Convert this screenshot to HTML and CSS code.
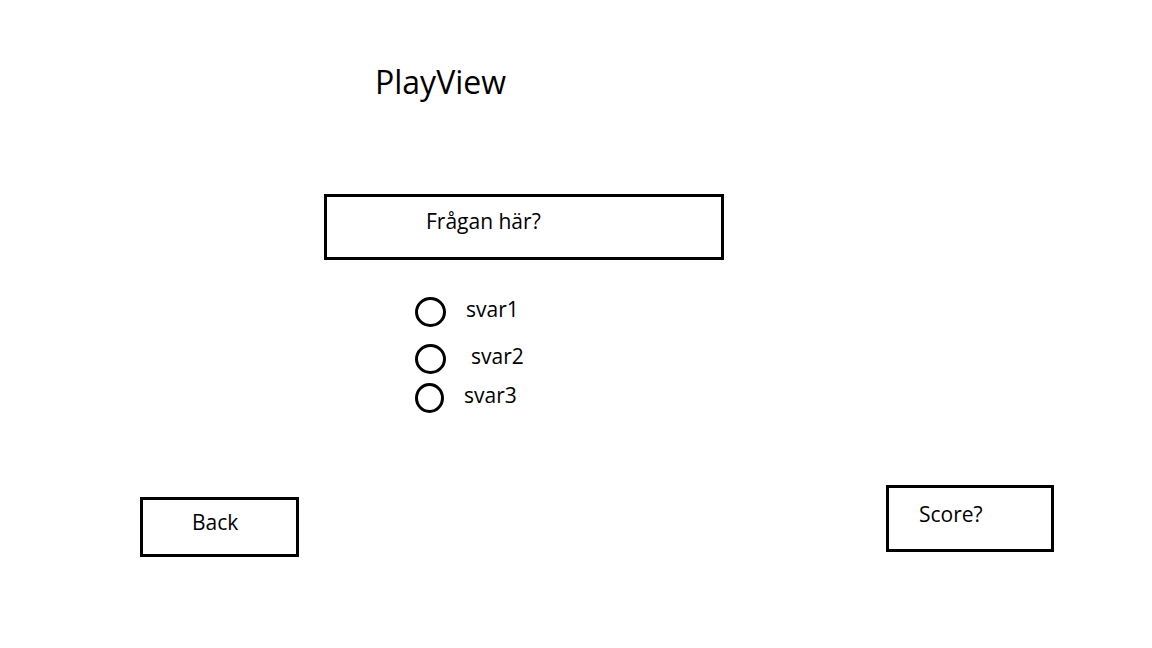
FILE: index.html
```html
<!DOCTYPE html>
<html lang="sv">
<head>
<meta charset="utf-8">
<title>PlayView</title>
<link rel="stylesheet" href="styles.css">
</head>
<body>
<main class="page">
  <h1 class="title">PlayView</h1>
  <div class="question">Frågan här?</div>
  <ul class="answers">
    <li class="answer a1"><span class="radio"></span><span class="label">svar1</span></li>
    <li class="answer a2"><span class="radio"></span><span class="label">svar2</span></li>
    <li class="answer a3"><span class="radio"></span><span class="label">svar3</span></li>
  </ul>
  <div class="actions">
    <div class="btn back">Back</div>
    <div class="btn score">Score?</div>
  </div>
</main>
</body>
</html>
```

FILE: styles.css
```css
html, body {
  margin: 0;
  padding: 0;
  background: #ffffff;
}
body {
  font-family: "Open Sans", "Noto Sans", sans-serif;
  color: #000000;
  width: 1152px;
  height: 648px;
  overflow: hidden;
}
.page {
  display: flex;
  flex-direction: column;
  align-items: flex-start;
}
.title {
  margin: 62px 0 0 375px;
  font-size: 32px;
  font-weight: 400;
  line-height: 40px;
}
.question {
  margin: 92px 0 0 324px;
  box-sizing: border-box;
  width: 400px;
  height: 66px;
  border: 3px solid #000;
  padding: 12px 0 0 99px;
  font-size: 21px;
  line-height: 24px;
}
.answers {
  list-style: none;
  margin: 37px 0 0 415px;
  padding: 0;
}
.answer {
  display: flex;
  align-items: center;
  height: 30px;
}
.a2 { margin-top: 17px; }
.a3 { margin-top: 9px; }
.radio {
  box-sizing: border-box;
  width: 31px;
  height: 30px;
  border: 3px solid #000;
  border-radius: 50%;
}
.a3 .radio { width: 29px; }
.label {
  font-size: 21px;
  line-height: 24px;
  margin-top: -6px;
}
.a1 .label { margin-left: 20px; }
.a2 .label { margin-left: 25px; }
.a3 .label { margin-left: 20px; }
.actions {
  align-self: stretch;
  display: flex;
  align-items: flex-start;
  margin-top: 72px;
  padding: 0 98px 0 140px;
}
.btn {
  box-sizing: border-box;
  border: 3px solid #000;
  font-size: 21px;
  line-height: 24px;
}
.back {
  width: 159px;
  height: 60px;
  margin-top: 12px;
  padding: 10px 0 0 49px;
}
.score {
  margin-left: auto;
  width: 168px;
  height: 67px;
  padding: 14px 0 0 30px;
}
```
